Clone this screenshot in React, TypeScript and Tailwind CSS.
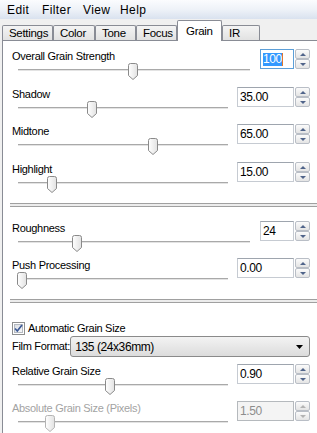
import React from 'react';

const TRACK_START = 18;

function Thumb({ disabled }: { disabled?: boolean }) {
  return (
    <svg width="10" height="17" viewBox="0 0 10 17">
      <defs>
        <linearGradient id="tg" x1="0" y1="0" x2="1" y2="0">
          <stop offset="0" stopColor="#ffffff" />
          <stop offset="1" stopColor="#e2e2e2" />
        </linearGradient>
      </defs>
      <path
        d="M0.5 2.5 Q0.5 0.5 2.5 0.5 H7.5 Q9.5 0.5 9.5 2.5 V12.5 L5 16.5 L0.5 12.5 Z"
        fill="url(#tg)"
        stroke={disabled ? '#b4b4b4' : '#8a8a8a'}
      />
    </svg>
  );
}

function Slider({ thumb, wide, disabled }: { thumb: number; wide?: boolean; disabled?: boolean }) {
  return (
    <div className={`relative h-[17px] ml-[6px] pt-[6px] ${wide ? 'w-[232px]' : 'w-[210px]'}`}>
      <div className="h-[2px] border-t border-[#a9a9a9] bg-[#e3e3e3]" />
      <div className="absolute top-0" style={{ left: thumb - 5 - TRACK_START }}>
        <Thumb disabled={disabled} />
      </div>
    </div>
  );
}

function Spin({ disabled }: { disabled?: boolean }) {
  const c = disabled ? '#b3b3b3' : '#50648a';
  return (
    <div className="flex flex-col w-[15px] h-[20px]">
      <div className="h-[10px] flex items-center justify-center rounded-[2px] border border-[#b9bec6] bg-gradient-to-b from-[#fbfbfb] to-[#e4e4e4]">
        <svg width="6" height="3" viewBox="0 0 6 3">
          <path d="M3 0 L6 3 H0 Z" fill={c} />
        </svg>
      </div>
      <div className="h-[10px] flex items-center justify-center rounded-[2px] border border-[#b9bec6] bg-gradient-to-b from-[#fbfbfb] to-[#e4e4e4]">
        <svg width="6" height="3" viewBox="0 0 6 3">
          <path d="M0 0 H6 L3 3 Z" fill={c} />
        </svg>
      </div>
    </div>
  );
}

type RowProps = {
  label: string;
  value: string;
  thumb: number;
  h: string;
  wide?: boolean;
  focused?: boolean;
  disabled?: boolean;
};

function SliderRow({ label, value, thumb, h, wide, focused, disabled }: RowProps) {
  let box = 'border border-[#c6cbd2] border-t-[#9ea5ae] bg-white';
  if (focused) box = 'border border-[#5c9fd8] bg-white';
  if (disabled) box = 'border border-[#b5b9bd] bg-[#f4f4f4] text-[#8d8d8d]';
  return (
    <div className={`flex justify-between pr-[7px] ${h}`}>
      <div className="pl-[9px]">
        <div className={`leading-[14px] whitespace-nowrap ${disabled ? 'text-[#a3a3a3]' : ''}`}>{label}</div>
        <Slider thumb={thumb} wide={wide} disabled={disabled} />
      </div>
      <div className="flex gap-px">
        <div className={`h-[20px] flex items-center pl-[2px] ${wide ? 'w-[34px]' : 'w-[57px]'} ${box}`}>
          {focused ? (
            <>
              <span className="bg-[#3399ff] text-white text-[12px] tracking-[-0.4px] leading-[13px]">{value}</span>
              <span className="w-px h-[13px] bg-[#e0782c]" />
            </>
          ) : (
            <span className="text-[12px] tracking-[-0.4px]">{value}</span>
          )}
        </div>
        <Spin disabled={disabled} />
      </div>
    </div>
  );
}

function Separator({ className }: { className: string }) {
  return (
    <div className={`ml-[7px] h-[4px] border-t border-b border-[#a0a0a0] bg-[#ececec] ${className}`} />
  );
}

const tabs = [
  { name: 'Settings', w: 'w-[51px]' },
  { name: 'Color', w: 'w-[42px]' },
  { name: 'Tone', w: 'w-[41px]' },
  { name: 'Focus', w: 'w-[41px]' },
  { name: 'Grain', w: 'w-[45px]', active: true },
  { name: 'IR', w: 'w-[38px]' },
];

export default function App() {
  return (
    <div className="w-[317px] h-[433px] overflow-hidden flex flex-col bg-[#f0f0f0] text-black text-[11px] tracking-[-0.3px] font-['Liberation_Sans',Arial,sans-serif]">
      {/* menu */}
      <div className="h-[19px] shrink-0 flex items-center text-[12px] tracking-[0.4px] bg-gradient-to-b from-[#fbfcfe] via-[#eef2f8] to-[#d9e2ef]">
        <span className="ml-[7px] w-[35px]">Edit</span>
        <span className="w-[41px]">Filter</span>
        <span className="w-[37px]">View</span>
        <span>Help</span>
      </div>

      {/* tabs */}
      <div className="h-[21px] shrink-0 flex items-end pl-[2px] relative z-10">
        {tabs.map((t) =>
          t.active ? (
            <div
              key={t.name}
              className={`${t.w} h-[21px] -mb-px pl-[8px] pt-[3px] leading-[14px] text-[11.5px] whitespace-nowrap bg-white border-t border-l border-r border-[#898c95] rounded-t-[2px]`}
            >
              {t.name}
            </div>
          ) : (
            <div
              key={t.name}
              className={`${t.w} h-[15px] pl-[6px] pt-[1px] leading-[13px] text-[11.5px] whitespace-nowrap overflow-hidden bg-gradient-to-b from-[#f4f4f4] to-[#e2e2e2] border-t border-l border-r border-[#898c95] rounded-t-[2px]`}
            >
              {t.name}
            </div>
          )
        )}
      </div>

      {/* panel */}
      <div className="ml-[2px] flex-1 w-[315px] bg-white border-l border-t border-[#898c95]">
        <div className="pt-[8px]">
          <SliderRow label="Overall Grain Strength" value="100" thumb={133} h="h-[38px]" wide focused />
          <SliderRow label="Shadow" value="35.00" thumb={92} h="h-[37px]" />
          <SliderRow label="Midtone" value="65.00" thumb={153} h="h-[38px]" />
          <SliderRow label="Highlight" value="15.00" thumb={52} h="h-[37px]" />
        </div>
        <Separator className="mt-[4px]" />
        <div className="mt-[14px]">
          <SliderRow label="Roughness" value="24" thumb={77} h="h-[37px]" wide />
          <SliderRow label="Push Processing" value="0.00" thumb={22} h="h-[37px]" />
        </div>
        <Separator className="mt-[4px]" />

        <div className="mt-[18px] pl-[9px] h-[14px] flex items-center gap-[2px]">
          <svg width="13" height="13" viewBox="0 0 13 13">
            <defs>
              <linearGradient id="cb" x1="0" y1="0" x2="1" y2="1">
                <stop offset="0" stopColor="#d9dde3" />
                <stop offset="1" stopColor="#f8f9fa" />
              </linearGradient>
            </defs>
            <rect x="0.5" y="0.5" width="12" height="12" fill="#fff" stroke="#8e8f8f" />
            <rect x="2.5" y="2.5" width="8" height="8" fill="url(#cb)" stroke="#b5bac1" />
            <path d="M3 6.5 L5.3 9 L10 3" fill="none" stroke="#3d5a96" strokeWidth="1.7" />
          </svg>
          <span className="ml-[1px]">Automatic Grain Size</span>
        </div>

        <div className="mt-[1px] pl-[9px] pr-[7px] flex items-center justify-between">
          <span className="whitespace-nowrap">Film Format:</span>
          <div className="w-[240px] shrink-0 h-[21px] flex items-center justify-between pl-[4px] pr-[6px] rounded-[3px] border border-[#8a8a8a] bg-gradient-to-b from-[#f3f3f3] to-[#dcdcdc]">
            <span className="text-[12px] tracking-[-0.4px]">135 (24x36mm)</span>
            <svg width="7" height="4" viewBox="0 0 7 4">
              <path d="M0 0 H7 L3.5 4 Z" fill="#000" />
            </svg>
          </div>
        </div>

        <div className="mt-[7px]">
          <SliderRow label="Relative Grain Size" value="0.90" thumb={110} h="h-[37px]" />
          <SliderRow label="Absolute Grain Size (Pixels)" value="1.50" thumb={50} h="h-[37px]" disabled />
        </div>
      </div>
    </div>
  );
}
